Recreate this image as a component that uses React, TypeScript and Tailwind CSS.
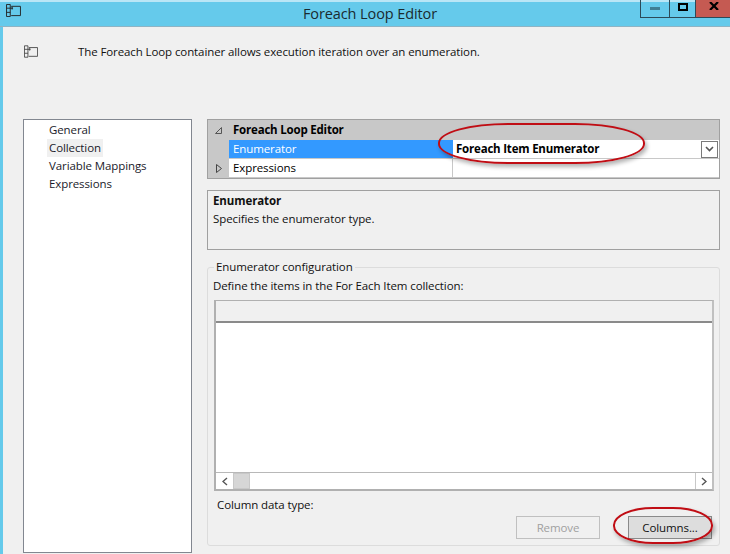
import React from 'react';

const font = { fontFamily: '"Open Sans", "Noto Sans", sans-serif' };

// small container glyph used in the title bar and the header
function LoopIcon({ className }: { className?: string }) {
  return (
    <svg viewBox="0 0 16 14" className={className} fill="none" stroke="currentColor" strokeWidth="1">
      <path d="M5.5 2.5h10v10h-10" />
      <path d="M.5.5h4v13h-4z" />
      <path d="M.5 4.5h4M.5 9h4M4.5 4.5h3M6.5 3v3" />
    </svg>
  );
}

function TitleBar() {
  return (
    <div className="relative flex h-[27px] shrink-0 items-center justify-center border-t-2 border-b border-t-[#b9e6f6] border-b-[#8fb4c4] bg-[#65caeb] pl-[10px]">
      <LoopIcon className="absolute left-[6px] top-[2px] h-[13px] w-[15px] text-[#222]" />
      <span className="pb-[1px] text-[14.5px] tracking-[-0.1px] text-[#1a2a30]">Foreach Loop Editor</span>
      <div className="absolute right-0 top-[-2px] mr-[-1px] flex h-[18px] items-stretch border-b border-[#2c4a58]">
        <div className="flex w-[29px] items-center justify-center border-l border-[#2c4a58]">
          <div className="h-[3px] w-[10px] bg-[#3f7f95]" />
        </div>
        <div className="flex w-[26px] items-start justify-center border-l border-[#2c4a58] pt-[3px]">
          <div className="h-[8px] w-[10px] border-2 border-black" />
        </div>
        <div className="flex w-[36px] items-start justify-center border-l border-[#2c4a58] bg-[#c55a52] pt-[2px]">
          <svg viewBox="0 0 10 8" className="h-[8px] w-[10px]" stroke="black" strokeWidth="2.2">
            <path d="M1 0l8 8M9 0L1 8" />
          </svg>
        </div>
      </div>
    </div>
  );
}

function NavList() {
  const items = ['General', 'Collection', 'Variable Mappings', 'Expressions'];
  return (
    <div className="flex h-[434px] w-[169px] shrink-0 flex-col items-start border border-[#828790] bg-white pl-[23px] pt-[1px] text-[11.5px] tracking-[-0.1px]">
      {items.map((item) => (
        <div
          key={item}
          className={`flex h-[18px] items-center px-[2px] text-[#1a1a2a] ${item === 'Collection' ? 'bg-[#f0f0f0]' : ''}`}
        >
          {item}
        </div>
      ))}
    </div>
  );
}

function PropertyGrid() {
  return (
    <div className="flex h-[60px] flex-col border border-[#a0a0a0] bg-white text-[11.5px] tracking-[-0.1px]">
      <div className="flex h-[20px] items-center bg-[#c8c8c8]">
        <div className="flex w-[21px] justify-center">
          <svg viewBox="0 0 7 7" className="h-[7px] w-[7px]" fill="none" stroke="#555">
            <path d="M6.5.5v6h-6z" />
          </svg>
        </div>
        <span className="pl-[4px] font-bold tracking-[-0.2px] text-black">Foreach Loop Editor</span>
      </div>
      <div className="flex h-[19px] border-b border-[#c8c8c8]">
        <div className="w-[21px] bg-[#c8c8c8]" />
        <div className="flex w-[224px] items-center bg-[#3399ff] pl-[4px] text-white">Enumerator</div>
        <div className="flex flex-1 items-center justify-between pl-[3px]">
          <span className="font-bold tracking-[-0.2px] text-black">Foreach Item Enumerator</span>
          <div className="mr-[1px] flex h-[17px] w-[17px] items-center justify-center border border-[#7a7a7a]">
            <svg viewBox="0 0 9 6" className="h-[6px] w-[9px]" fill="none" stroke="#555" strokeWidth="1.6">
              <path d="M1 1l3.5 3.5L8 1" />
            </svg>
          </div>
        </div>
      </div>
      <div className="flex h-[19px] border-b border-[#c8c8c8]">
        <div className="flex w-[21px] items-center justify-center bg-[#c8c8c8]">
          <svg viewBox="0 0 6 9" className="h-[9px] w-[6px]" fill="none" stroke="#444">
            <path d="M.5.5l5 4-5 4z" />
          </svg>
        </div>
        <div className="flex w-[224px] items-center border-r border-[#c8c8c8] pl-[4px] text-black">Expressions</div>
        <div className="flex-1" />
      </div>
    </div>
  );
}

function HelpBox() {
  return (
    <div className="mt-[11px] h-[60px] border border-[#a0a0a0] px-[5px] pt-[1px] text-[11.5px] leading-[18px] tracking-[-0.1px] text-[#111]">
      <div className="font-bold">Enumerator</div>
      <div>Specifies the enumerator type.</div>
    </div>
  );
}

function ScrollBar() {
  return (
    <div className="flex h-[17px] border-t border-[#b8b8b8] bg-white">
      <div className="flex w-[17px] items-center justify-center">
        <svg viewBox="0 0 6 9" className="h-[9px] w-[6px]" fill="none" stroke="#555" strokeWidth="1.4">
          <path d="M5 1L1 4.5 5 8" />
        </svg>
      </div>
      <div className="w-[17px] border border-[#c8c8c8] bg-[#d6d6d6]" />
      <div className="flex-1" />
      <div className="flex w-[17px] items-center justify-center border-l border-[#c8c8c8]">
        <svg viewBox="0 0 6 9" className="h-[9px] w-[6px]" fill="none" stroke="#555" strokeWidth="1.4">
          <path d="M1 1l4 3.5L1 8" />
        </svg>
      </div>
    </div>
  );
}

function ConfigGroup() {
  return (
    <fieldset className="mt-[9px] flex h-[287px] flex-col rounded-[3px] border border-[#dcdcdc] px-[5px] text-[11.5px] tracking-[-0.1px] text-[#111]">
      <legend className="ml-[1px] px-[2px] leading-[16px]">Enumerator configuration</legend>
      <div className="mt-[2px] leading-[18px]">Define the items in the For Each Item collection:</div>
      <div className="ml-[1px] mt-[5px] flex h-[191px] w-[500px] flex-col border-2 border-t border-[#b0b0b0] border-r-[#c0c0c0] bg-white">
        <div className="h-[22px] border-b-2 border-[#8a8a8a] bg-[#f0f0f0]" />
        <div className="flex-1" />
        <ScrollBar />
      </div>
      <div className="mt-[5px] pl-[4px] leading-[18px]">Column data type:</div>
      <div className="mt-[2px] flex justify-end gap-[28px] pr-[2px]">
        <button className="h-[23px] w-[84px] border border-[#c0c0c0] text-[#a0a0a0]">Remove</button>
        <button className="h-[23px] w-[84px] border border-[#8a8a8a] bg-[#dddddd] text-[#111]">Columns...</button>
      </div>
    </fieldset>
  );
}

export default function App() {
  return (
    <div style={font} className="relative flex h-[554px] w-[730px] flex-col overflow-hidden bg-[#f0f0f0]">
      <TitleBar />
      <div className="flex flex-1 flex-col border-l-[3px] border-[#65caeb]">
        <div className="flex h-[92px] shrink-0 items-start pl-[21px] pt-[17px]">
          <LoopIcon className="mt-[1px] h-[13px] w-[14px] text-[#444]" />
          <span className="ml-[40px] text-[11.5px] leading-[16px] tracking-[-0.1px] text-[#111]">
            The Foreach Loop container allows execution iteration over an enumeration.
          </span>
        </div>
        <div className="flex pl-[20px]">
          <NavList />
          <div className="ml-[15px] w-[513px]">
            <PropertyGrid />
            <HelpBox />
            <ConfigGroup />
          </div>
        </div>
      </div>
      {/* red annotation rings drawn over the screenshot */}
      <div className="absolute left-[438px] top-[123px] h-[41px] w-[207px] rounded-[70px/20px] border-2 border-[#c00d14] shadow-[2px_3px_4px_rgba(0,0,0,0.3)]" />
      <div className="absolute left-[613px] top-[507px] h-[37px] w-[100px] rounded-[40px/18px] border-2 border-[#c00d14] shadow-[2px_3px_4px_rgba(0,0,0,0.3)]" />
    </div>
  );
}
